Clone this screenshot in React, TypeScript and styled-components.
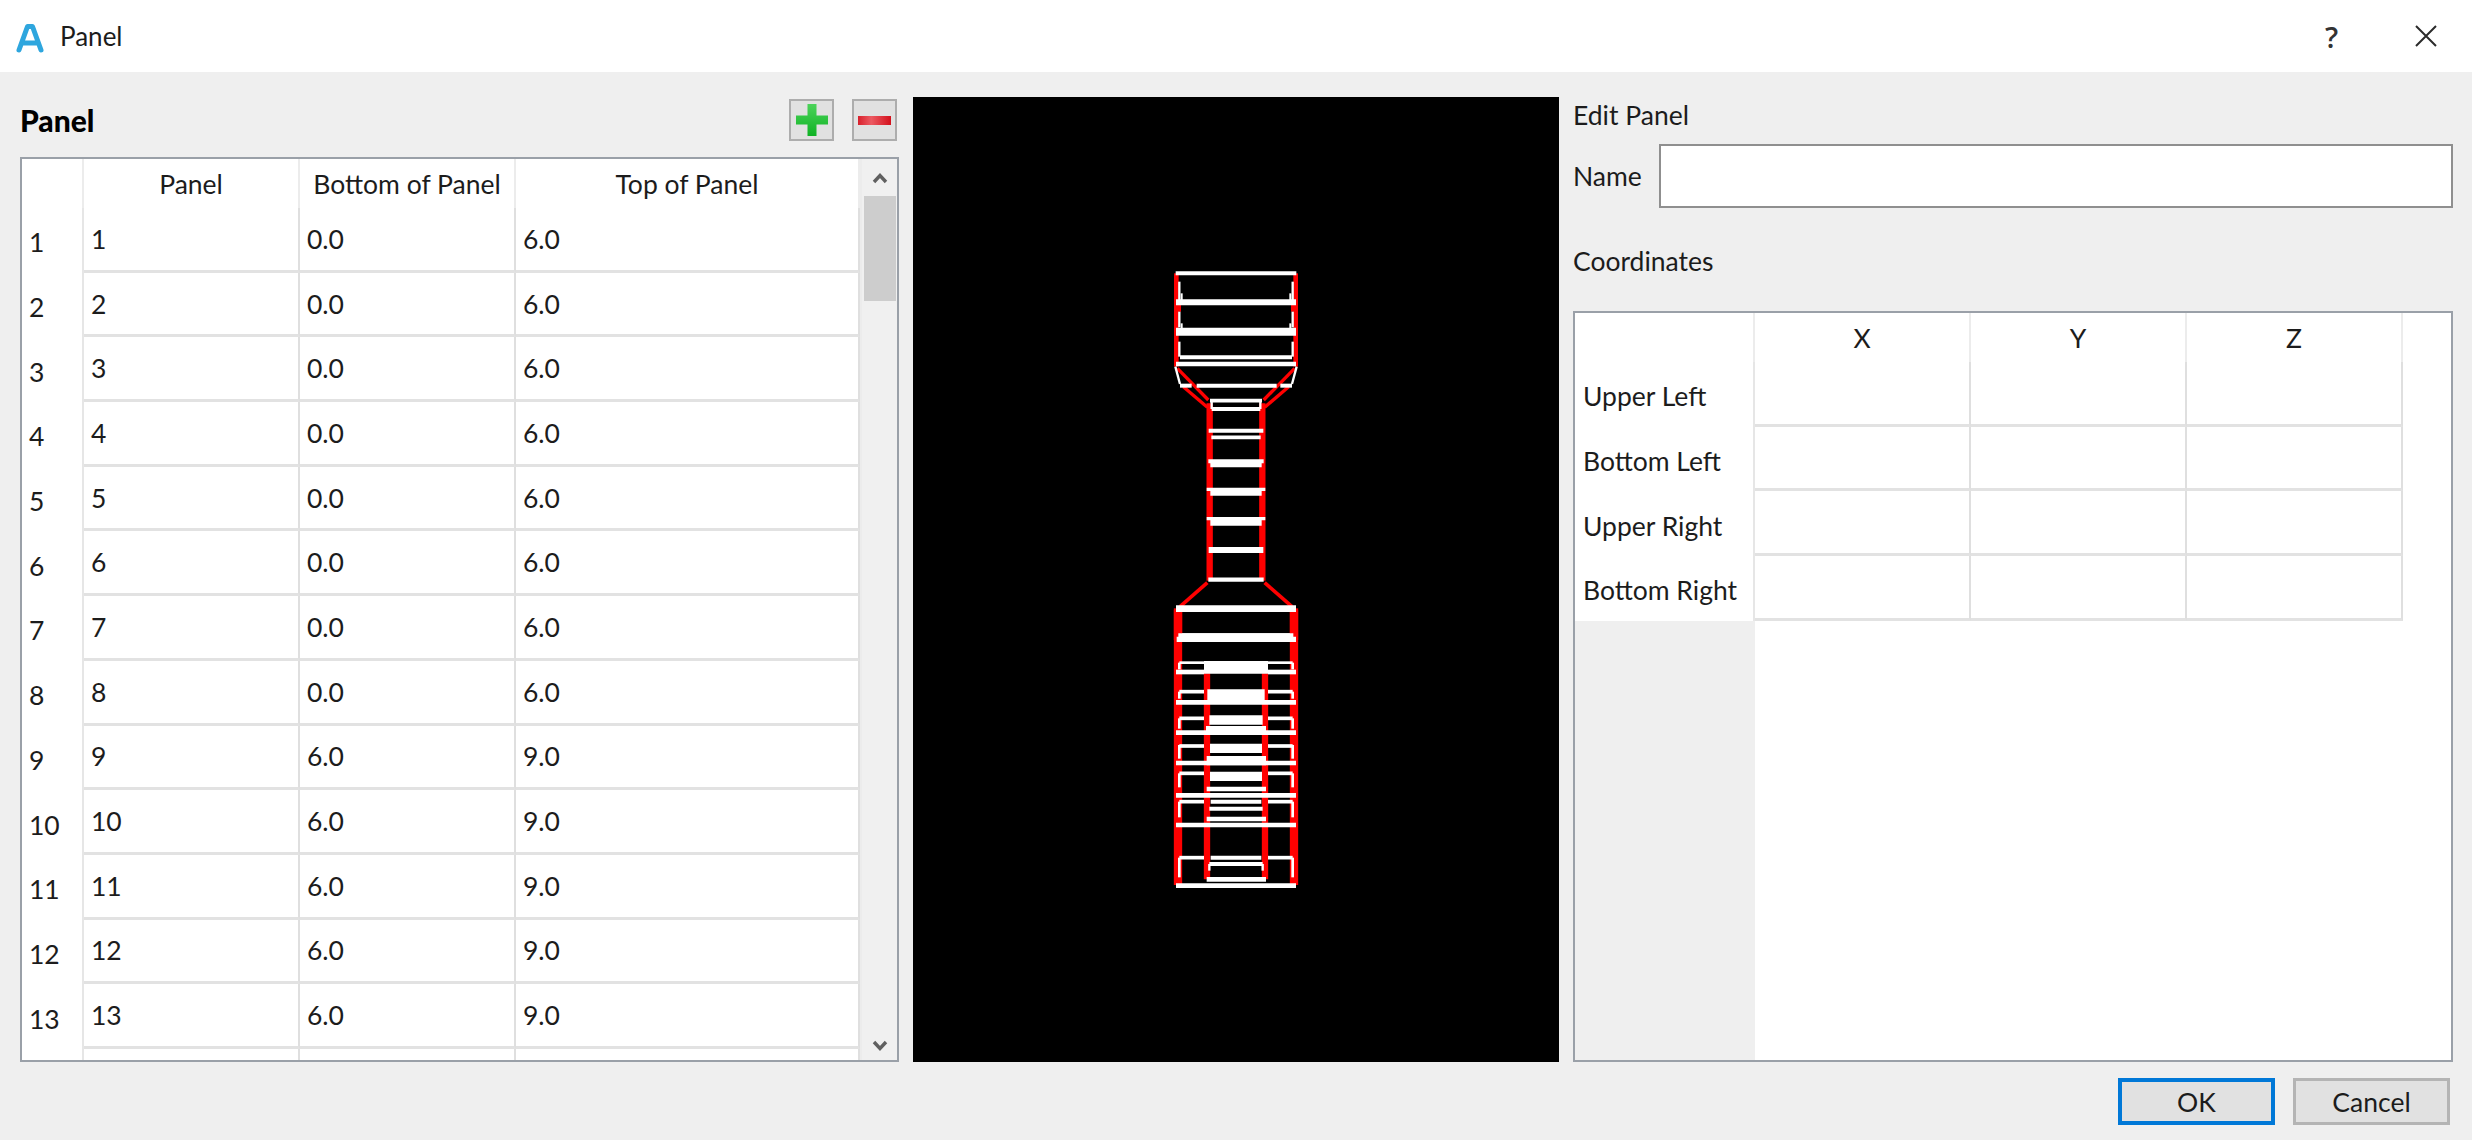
import React from "react";
import styled, { createGlobalStyle } from "styled-components";

const Global = createGlobalStyle`
  html, body { margin: 0; padding: 0; background: #efefef; }
  * { box-sizing: border-box; }
`;

const Window = styled.div`
  width: 2472px;
  height: 1140px;
  display: flex;
  flex-direction: column;
  overflow: hidden;
  background: #efefef;
  color: #1c1c1c;
  font-family: Lato, "Open Sans", sans-serif;
  font-size: 26.5px;
`;

const TitleBar = styled.header`
  height: 72px;
  flex: none;
  display: flex;
  align-items: center;
  background: #fff;
  padding: 0 35px 0 14px;
`;

const AppTitle = styled.span`
  margin-left: 14px;
  flex: 1;
  font-size: 26px;
`;

const HelpMark = styled.span`
  width: 90px;
  font-family: "Open Sans", sans-serif;
  font-size: 29px;
  font-weight: 600;
  color: #333;
`;

const Content = styled.main`
  flex: 1;
  display: flex;
  flex-direction: column;
  padding: 25px 22px 15px 20px;
`;

const Columns = styled.div`
  height: 965px;
  display: grid;
  grid-template-columns: 879px 646px 880px;
  column-gap: 14px;
`;

const Column = styled.section`
  display: flex;
  flex-direction: column;
  min-height: 0;
`;

const PanelHeader = styled.div`
  height: 60px;
  flex: none;
  display: flex;
  align-items: flex-start;
  gap: 18px;
  padding: 2px 2px 0 0;
`;

const PanelTitle = styled.h2`
  margin: 0 auto 0 0;
  font-size: 30px;
  line-height: 42px;
  font-weight: 900;
  color: #000;
`;

const IconButton = styled.button`
  width: 45px;
  height: 42px;
  padding: 0;
  display: flex;
  align-items: center;
  justify-content: center;
  background: #e1e1e1;
  border: 2px solid #adadad;
`;

const Frame = styled.div`
  flex: 1;
  min-height: 0;
  display: flex;
  background: #fff;
  border: 2px solid #9aa0a8;
  overflow: hidden;
`;

const Grid = styled.div<{ $columns: string; $rows: string }>`
  flex: 1;
  display: grid;
  grid-template-columns: ${(p) => p.$columns};
  grid-template-rows: ${(p) => p.$rows};
  min-width: 0;
`;

const HeaderCell = styled.div<{ $blank?: boolean }>`
  display: flex;
  align-items: center;
  justify-content: center;
  border-right: ${(p) => (p.$blank ? "0" : "2px solid #ececec")};
`;

const RowLabel = styled.div<{ $side: number; $shift: number }>`
  display: flex;
  align-items: center;
  padding: ${(p) => p.$shift}px 0 0 ${(p) => p.$side}px;
  border-right: 2px solid #e6e6e6;
`;

const Cell = styled.div`
  display: flex;
  align-items: center;
  padding-left: 7px;
  border-right: 2px solid #dfdfdf;
  border-bottom: 3px solid #e2e2e2;
`;

const Filler = styled.div<{ $shade?: boolean; $wide?: boolean }>`
  grid-column: ${(p) => (p.$wide ? "2 / -1" : "auto")};
  background: ${(p) => (p.$shade ? "#efefef" : "#fff")};
`;

const ScrollBar = styled.div`
  width: 37px;
  flex: none;
  background: #f0f0f0;
  display: flex;
  flex-direction: column;
  align-items: center;
  border-left: 2px solid #ececec;
  padding: 14px 0 9px;
`;

const ScrollThumb = styled.div`
  width: 32px;
  height: 105px;
  margin-top: 12px;
  background: #cdcdcd;
`;

const ScrollSpacer = styled.div`
  flex: 1;
`;

const Canvas = styled.div`
  background: #000;
  overflow: hidden;
`;

const Drawing = styled.svg`
  display: block;
  width: 646px;
  height: 965px;
`;

const Caption = styled.div`
  height: 36px;
  flex: none;
  display: flex;
  align-items: center;
`;

const CoordinatesCaption = styled(Caption)`
  margin: 35px 0 32px;
`;

const NameRow = styled.div`
  height: 64px;
  flex: none;
  margin-top: 11px;
  display: flex;
  align-items: center;
`;

const NameLabel = styled.label`
  width: 86px;
  flex: none;
`;

const NameInput = styled.input`
  flex: 1;
  height: 64px;
  background: #fff;
  border: 2px solid #8f8f8f;
  outline: none;
`;

const Footer = styled.footer`
  margin-top: 16px;
  display: flex;
  justify-content: flex-end;
  gap: 18px;
`;

const DialogButton = styled.button<{ $primary?: boolean }>`
  width: 157px;
  height: 47px;
  padding: 0;
  background: #e1e1e1;
  color: #1c1c1c;
  font: inherit;
  border: ${(p) => (p.$primary ? "4px solid #0078d7" : "3px solid #b4b4b4")};
`;

type Seg = [number, number, number, number, number];

const mirror = (cx: number, list: Seg[]): Seg[] =>
  list.flatMap(([a, b, c, d, w]) => [
    [a, b, c, d, w] as Seg,
    [2 * cx - a, b, 2 * cx - c, d, w] as Seg,
  ]);

const h = (y: number, a: number, b: number, w: number): Seg => [a, y, b, y, w];
const v = (x: number, a: number, b: number, w: number): Seg => [x, a, x, b, w];

const upperRed: Seg[] = mirror(408, [
  v(229, 100, 380, 14),
  v(236, 195, 215, 14),
  [232, 385, 325, 480, 10],
  [250, 440, 322, 502, 10],
  v(329, 490, 1022, 19),
  [322, 1028, 240, 1100, 11],
  v(234, 1105, 1200, 25),
]);

const upperWhite: Seg[] = [
  h(100, 227, 589, 12),
  h(187, 228, 588, 18),
  h(275, 228, 588, 24),
  h(352, 240, 576, 12),
  h(372, 228, 588, 14),
  h(437, 290, 530, 12),
  h(482, 330, 486, 11),
  h(507, 335, 481, 12),
  h(572, 326, 490, 12),
  h(592, 334, 482, 11),
  h(664, 325, 491, 12),
  h(674, 331, 485, 16),
  h(748, 320, 496, 10),
  h(760, 331, 485, 14),
  h(836, 320, 496, 10),
  h(848, 331, 485, 18),
  h(930, 326, 490, 18),
  h(1019, 325, 491, 13),
  h(1105, 228, 588, 19),
  h(1188, 230, 586, 16),
  ...mirror(408, [
    v(238, 125, 180, 7),
    v(245, 160, 180, 6),
    v(238, 215, 262, 7),
    v(245, 250, 265, 6),
    v(238, 305, 350, 7),
    [226, 380, 240, 432, 7],
    h(437, 240, 275, 12),
    v(335, 482, 507, 7),
  ]),
];

const lowerRed: Seg[] = mirror(348, [
  v(174, 60, 885, 25),
  v(261, 250, 868, 19),
]);

const lowerWhite: Seg[] = [
  h(57, 168, 528, 18),
  h(138, 175, 520, 16),
  h(148, 170, 528, 16),
  h(232, 252, 444, 38),
  h(246, 168, 252, 14),
  h(246, 444, 528, 14),
  h(317, 262, 434, 38),
  h(337, 168, 528, 14),
  h(390, 268, 428, 28),
  h(420, 258, 438, 24),
  h(428, 168, 528, 14),
  h(475, 270, 426, 28),
  h(512, 260, 438, 28),
  h(519, 168, 528, 14),
  h(559, 270, 426, 28),
  h(597, 260, 438, 14),
  h(616, 168, 528, 14),
  h(635, 272, 424, 12),
  h(656, 268, 428, 12),
  h(687, 260, 438, 14),
  h(705, 168, 528, 14),
  h(803, 272, 424, 12),
  h(822, 268, 428, 12),
  h(868, 260, 438, 14),
  h(887, 168, 528, 14),
  ...mirror(348, [
    h(218, 178, 252, 8),
    v(178, 218, 238, 8),
    h(305, 178, 252, 11),
    v(178, 305, 326, 8),
    h(385, 178, 252, 11),
    v(178, 385, 416, 8),
    h(468, 178, 252, 11),
    v(178, 465, 506, 8),
    h(550, 178, 252, 11),
    v(178, 550, 592, 8),
    h(635, 178, 252, 11),
    v(178, 635, 682, 8),
    h(803, 178, 252, 11),
    v(178, 803, 862, 8),
    v(268, 822, 842, 7),
  ]),
];

const Strokes = ({ list, color }: { list: Seg[]; color: string }) => (
  <>
    {list.map(([x1, y1, x2, y2, w], i) => (
      <line key={i} x1={x1} y1={y1} x2={x2} y2={y2} strokeWidth={w} stroke={color} />
    ))}
  </>
);

const Model = () => (
  <Drawing viewBox="913 97 646 965">
    <g transform="translate(1100 240) scale(0.33333)">
      <Strokes list={upperRed} color="#ff0000" />
      <Strokes list={upperWhite} color="#ffffff" />
    </g>
    <g transform="translate(1120 590) scale(0.33333)">
      <Strokes list={lowerRed} color="#ff0000" />
      <Strokes list={lowerWhite} color="#ffffff" />
    </g>
  </Drawing>
);

const AppLogo = () => (
  <svg width="32" height="38" viewBox="0 0 32 38">
    <path d="M5 33 L13.5 9.5 H18.5 L27 33 M9.5 26 H22.5" fill="none" stroke="#2ea6de" strokeWidth="5" strokeLinecap="round" strokeLinejoin="round" />
  </svg>
);

const CloseGlyph = () => (
  <svg width="22" height="22" viewBox="0 0 22 22">
    <path d="M1 1 L21 21 M21 1 L1 21" stroke="#2b2b2b" strokeWidth="2" />
  </svg>
);

const PlusGlyph = () => (
  <svg width="34" height="34" viewBox="0 0 34 34">
    <defs>
      <linearGradient id="plusFill" x1="0" y1="0" x2="0" y2="1">
        <stop offset="0" stopColor="#4cd35a" />
        <stop offset="1" stopColor="#0fb224" />
      </linearGradient>
    </defs>
    <path d="M12.5 1 H21.5 V12.5 H33 V21.5 H21.5 V33 H12.5 V21.5 H1 V12.5 H12.5 Z" fill="url(#plusFill)" />
  </svg>
);

const MinusGlyph = () => (
  <svg width="33" height="9" viewBox="0 0 33 9">
    <defs>
      <linearGradient id="minusFill" x1="0" y1="0" x2="1" y2="0">
        <stop offset="0" stopColor="#d8202c" />
        <stop offset="0.4" stopColor="#ec5a62" />
        <stop offset="1" stopColor="#d3101c" />
      </linearGradient>
    </defs>
    <rect width="33" height="9" fill="url(#minusFill)" />
  </svg>
);

const Chevron = ({ down }: { down?: boolean }) => (
  <svg width="16" height="11" viewBox="0 0 16 11">
    <path d={down ? "M2 2 L8 8.5 L14 2" : "M2 9 L8 2.5 L14 9"} fill="none" stroke="#606060" strokeWidth="3.4" />
  </svg>
);

const panels = [
  [1, "0.0", "6.0"],
  [2, "0.0", "6.0"],
  [3, "0.0", "6.0"],
  [4, "0.0", "6.0"],
  [5, "0.0", "6.0"],
  [6, "0.0", "6.0"],
  [7, "0.0", "6.0"],
  [8, "0.0", "6.0"],
  [9, "6.0", "9.0"],
  [10, "6.0", "9.0"],
  [11, "6.0", "9.0"],
  [12, "6.0", "9.0"],
  [13, "6.0", "9.0"],
] as const;

const corners = ["Upper Left", "Bottom Left", "Upper Right", "Bottom Right"];

export default function App() {
  return (
    <Window>
      <Global />
      <TitleBar>
        <AppLogo />
        <AppTitle>Panel</AppTitle>
        <HelpMark>?</HelpMark>
        <CloseGlyph />
      </TitleBar>
      <Content>
        <Columns>
          <Column>
            <PanelHeader>
              <PanelTitle>Panel</PanelTitle>
              <IconButton><PlusGlyph /></IconButton>
              <IconButton><MinusGlyph /></IconButton>
            </PanelHeader>
            <Frame>
              <Grid $columns="62px 216px 216px 344px" $rows="49px repeat(14, 64.7px)">
                <HeaderCell />
                <HeaderCell>Panel</HeaderCell>
                <HeaderCell>Bottom of Panel</HeaderCell>
                <HeaderCell>Top of Panel</HeaderCell>
                {panels.map(([n, bottom, top]) => (
                  <React.Fragment key={n}>
                    <RowLabel $side={7} $shift={4}>{n}</RowLabel>
                    <Cell>{n}</Cell>
                    <Cell>{bottom}</Cell>
                    <Cell>{top}</Cell>
                  </React.Fragment>
                ))}
                <RowLabel $side={7} $shift={4} />
                <Cell />
                <Cell />
                <Cell />
              </Grid>
              <ScrollBar>
                <Chevron />
                <ScrollThumb />
                <ScrollSpacer />
                <Chevron down />
              </ScrollBar>
            </Frame>
          </Column>
          <Canvas><Model /></Canvas>
          <Column>
            <Caption>Edit Panel</Caption>
            <NameRow>
              <NameLabel>Name</NameLabel>
              <NameInput />
            </NameRow>
            <CoordinatesCaption>Coordinates</CoordinatesCaption>
            <Frame>
              <Grid $columns="180px 216px 216px 216px 1fr" $rows="49px repeat(4, 64.7px) 1fr">
                <HeaderCell />
                <HeaderCell>X</HeaderCell>
                <HeaderCell>Y</HeaderCell>
                <HeaderCell>Z</HeaderCell>
                <HeaderCell $blank />
                {corners.map((name) => (
                  <React.Fragment key={name}>
                    <RowLabel $side={8} $shift={4}>{name}</RowLabel>
                    <Cell />
                    <Cell />
                    <Cell />
                    <Filler />
                  </React.Fragment>
                ))}
                <Filler $shade />
                <Filler $wide />
              </Grid>
            </Frame>
          </Column>
        </Columns>
        <Footer>
          <DialogButton $primary>OK</DialogButton>
          <DialogButton>Cancel</DialogButton>
        </Footer>
      </Content>
    </Window>
  );
}
